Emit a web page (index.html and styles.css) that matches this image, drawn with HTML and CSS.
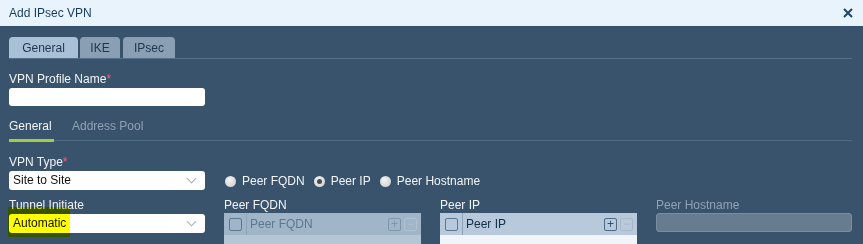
FILE: index.html
```html
<!DOCTYPE html>
<html lang="en">
<head>
    <meta charset="UTF-8">
    <title>Add IPsec VPN</title>
    <link rel="stylesheet" href="styles.css">
</head>
<body>
    <div class="dialog">
        <div class="header">
            <span class="title">Add IPsec VPN</span>
            <svg class="close" width="10" height="10" viewBox="0 0 10 10">
                <path d="M1 1 L9 9 M9 1 L1 9" stroke="#1d4766" stroke-width="2"/>
            </svg>
        </div>

        <div class="content">
            <div class="tabs">
                <div class="tab active">General</div>
                <div class="tab tab-ike">IKE</div>
                <div class="tab tab-ipsec">IPsec</div>
            </div>

            <div class="label name-label">VPN Profile Name<span class="req">*</span></div>
            <div class="input name-input"></div>

            <div class="subtabs">
                <div class="subtab active">General</div>
                <div class="subtab">Address Pool</div>
            </div>

            <div class="grid">
                <div class="cell">
                    <div class="label">VPN Type<span class="req">*</span></div>
                    <div class="select">Site to Site <span class="chevron"></span></div>
                </div>
                <div class="cell radios">
                    <label class="radio"><span class="dot"></span>Peer FQDN</label>
                    <label class="radio"><span class="dot checked"></span>Peer IP</label>
                    <label class="radio"><span class="dot"></span>Peer Hostname</label>
                </div>

                <div class="cell">
                    <div class="label">Tunnel Initiate</div>
                    <div class="select">Automatic <span class="chevron"></span></div>
                </div>
                <div class="cell">
                    <div class="label">Peer FQDN</div>
                    <div class="table disabled">
                        <div class="thead">
                            <span class="check"></span>
                            <span class="col">Peer FQDN</span>
                            <span class="btn">+</span>
                            <span class="btn off">&minus;</span>
                        </div>
                        <div class="tbody"></div>
                    </div>
                </div>
                <div class="cell">
                    <div class="label">Peer IP</div>
                    <div class="table">
                        <div class="thead">
                            <span class="check"></span>
                            <span class="col">Peer IP</span>
                            <span class="btn">+</span>
                            <span class="btn off">&minus;</span>
                        </div>
                        <div class="tbody"></div>
                    </div>
                </div>
                <div class="cell">
                    <div class="label muted">Peer Hostname</div>
                    <div class="input off"></div>
                </div>
            </div>
        </div>

        <div class="highlight"></div>
    </div>
</body>
</html>
```

FILE: styles.css
```css
body {
    margin: 0;
    font-family: 'Liberation Sans', Arial, sans-serif;
    font-size: 12px;
    background: #38536b;
    overflow: hidden;
}

.dialog {
    position: relative;
    height: 244px;
    background: #38536b;
}

.header {
    height: 26px;
    background: #e8f3fc;
    display: flex;
    align-items: center;
    justify-content: space-between;
    padding: 0 10px 0 9px;
}

.title {
    color: #163d5c;
    font-size: 12px;
}

.content {
    padding: 11px 11px 0 9px;
}

/* top tabs */
.tabs {
    display: flex;
    height: 21px;
    border-bottom: 1px solid #536f89;
}

.tab {
    height: 21px;
    line-height: 22px;
    text-align: center;
    border-radius: 4px 4px 0 0;
    margin-right: 2px;
    color: #1c3550;
    background: #8a9fb3;
}

.tab.active {
    width: 69px;
    background: #a9c1d6;
}

.tab-ike {
    width: 40px;
}

.tab-ipsec {
    width: 52px;
    margin-left: 1px;
}

.label {
    color: #f2f4f6;
    height: 15px;
    line-height: 15px;
}

.label.muted {
    color: #8fa2b5;
}

.req {
    color: #f0607a;
}

.name-label {
    margin-top: 13px;
}

.input {
    height: 18px;
    background: #fff;
    border-radius: 3px;
    margin-top: 1px;
}

.name-input {
    width: 196px;
}

.input.off {
    background: #687c90;
    border: 1px solid #7a8ea2;
    height: 17px;
    margin-top: 0;
}

/* sub tabs */
.subtabs {
    display: flex;
    gap: 18px;
    margin-top: 13px;
    border-bottom: 1px solid #4e6a84;
    height: 21px;
}

.subtab {
    color: #8fa2b5;
    height: 21px;
    line-height: 15px;
}

.subtab.active {
    color: #f2f4f6;
    border-bottom: 3px solid #a4cc4a;
    height: 20px;
    width: 45px;
}

/* form grid */
.grid {
    display: grid;
    grid-template-columns: 196px 197px 197px 196px;
    column-gap: 19px;
    margin-top: 14px;
}

.cell:nth-child(2) {
    grid-column: 2 / 5;
}

.cell:nth-child(n+3) {
    margin-top: 8px;
}

.select {
    position: relative;
    height: 19px;
    line-height: 19px;
    background: #fff;
    border-radius: 3px;
    padding-left: 4px;
    color: #111;
    margin-top: 1px;
}

.chevron {
    position: absolute;
    right: 10px;
    top: 4px;
    width: 6px;
    height: 6px;
    border-right: 1px solid #a8b0b8;
    border-bottom: 1px solid #a8b0b8;
    transform: rotate(45deg);
}

.radios {
    display: flex;
    align-items: flex-end;
    gap: 8px;
    padding-bottom: 2px;
}

.radio {
    display: flex;
    align-items: center;
    color: #f2f4f6;
}

.dot {
    width: 11px;
    height: 11px;
    border-radius: 50%;
    background: radial-gradient(circle at 40% 35%, #f4f4f4, #c9c9c9);
    margin: 0 6px 0 1px;
    position: relative;
}

.dot.checked::after {
    content: "";
    position: absolute;
    left: 3px;
    top: 3px;
    width: 5px;
    height: 5px;
    border-radius: 50%;
    background: #4b4b4b;
}

/* tables */
.thead {
    height: 22px;
    display: flex;
    align-items: center;
    background: #b7c9da;
    color: #12304a;
}

.tbody {
    height: 12px;
    background: #f1f5f9;
}

.table.disabled .thead {
    background: #a0b5c8;
    color: #5e7790;
}

.table.disabled .tbody {
    background: #b5c7d5;
}

.check {
    width: 11px;
    height: 11px;
    border: 1px solid #5b7891;
    border-radius: 2px;
    margin: 0 4px 0 5px;
}

.col {
    flex: 1;
    border-left: 1px solid #8ea4b8;
    height: 22px;
    line-height: 22px;
    padding-left: 3px;
}

.btn {
    width: 11px;
    height: 11px;
    border: 1px solid #4f6c86;
    border-radius: 2px;
    line-height: 10px;
    text-align: center;
    font-size: 12px;
    color: #2f4f6b;
    margin-right: 3px;
}

.btn.off {
    border-color: #a9b9c8;
    color: #a9b9c8;
    margin-right: 4px;
}

.table.disabled .btn {
    border-color: #7f97ad;
    color: #7f97ad;
}

.table.disabled .btn.off {
    border-color: #b2c2d0;
    color: #b2c2d0;
}

/* marker highlight over the screenshot */
.highlight {
    position: absolute;
    left: 8px;
    top: 207px;
    width: 62px;
    height: 30px;
    background: #ffff00;
    mix-blend-mode: multiply;
}
```
